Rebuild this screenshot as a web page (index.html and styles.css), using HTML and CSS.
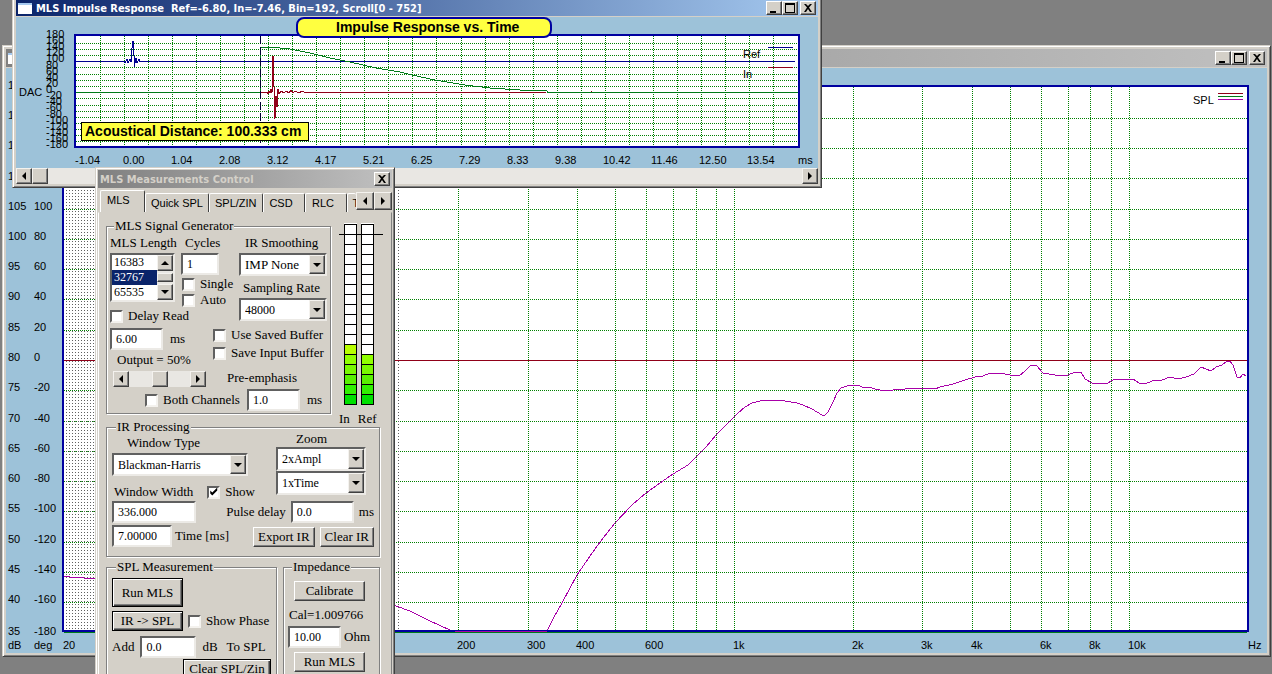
FILE: index.html
```html
<!DOCTYPE html>
<html lang="en">
<head>
<meta charset="utf-8">
<title>MLS Measurements</title>
<link rel="stylesheet" href="styles.css">
</head>
<body>
<main class="desktop">

<section class="window spl-window" aria-label="SPL">
  <header class="titlebar inactive">
    <span class="app-icon"></span>
    <span class="title"></span>
    <span class="window-buttons">
      <button class="cap" aria-label="Minimize"><svg viewBox="1 1 14 12"><path d="M4 10h6v2H4z"/></svg></button>
      <button class="cap" aria-label="Maximize"><svg viewBox="1 1 14 12"><path d="M3 2h10v10H3zM4 4v7h8V4z" fill-rule="evenodd"/></svg></button>
      <button class="cap close" aria-label="Close"><svg viewBox="1 1 14 12"><path d="M4 3h2l2 2 2-2h2L9 6.500l3 4.500h-2L8 8l-2 3H4l3-4.500z"/></svg></button>
    </span>
  </header>
  <svg class="chart" viewBox="6 68 1261 585" role="img" aria-label="SPL versus frequency">
    <path class="plot" d="M64 87H1247V631H64z"/>
    <path class="grid" d="M64 118H1247M64 148H1247M64 178H1247M64 209H1247M64 239H1247M64 269H1247M64 299H1247M64 330H1247M64 390H1247M64 421H1247M64 451H1247M64 481H1247M64 511H1247M64 542H1247M64 572H1247M64 602H1247M458 87V631M528 87V631M577 87V631M615 87V631M646 87V631M673 87V631M696 87V631M716 87V631M734 87V631M853 87V631M922 87V631M972 87V631M1010 87V631M1041 87V631M1068 87V631M1090 87V631M1111 87V631M1129 87V631"/>
    <path class="fine" d="M66 88V631M69 88V631M72 88V631M75 88V631M78 88V631M81 88V631M84 88V631M87 88V631M90 88V631M93 88V631M398 88V631"/>
    <path class="line red" d="M64 360H1247"/>
    <path class="line magenta" d="M64 576L70 577L84 578H100M390 605L396 606L410 611L430 621L450 630L455 631H547L554 617L562 603L577 575L590 556L600 542L615 523L632 505L646 493L660 483L673 474L688 465L697 456L706 447L716 435L729 422L737 414L745 407L752 403L760 401L770 400L785 401L797 403L803 405L812 409L822 415H825L828 412L833 402L837 393L841 388L847 386L853 385H858L862 387H869L875 389L880 390H893L905 389L920 388H930L935 389L940 387L953 384L965 380L975 377L983 376L990 373H1000L1010 375L1019 376L1025 371L1031 365H1036L1043 373L1055 375H1068L1075 372H1081L1085 379L1092 383L1106 384L1115 379H1133L1139 383H1147L1155 380H1162L1170 377L1178 379L1186 377L1194 374L1198 370L1201 367L1206 369L1211 371L1216 367L1222 365L1226 362L1230 361L1233 365L1237 377L1240 378L1243 374L1246 376"/>
    <path class="frame" d="M63 86H1248V631H63z"/>
    <path class="line green" d="M64 632H1247"/>
    <path class="line magenta" d="M455 631H547"/>
    <text x="1193" y="104">SPL</text>
    <path class="line red" d="M1218 93H1243"/><path class="line green" d="M1218 96H1243"/><path class="line magenta" d="M1218 99H1243"/>
    <text><tspan x="8" y="89">125</tspan><tspan x="8" y="119">120</tspan><tspan x="8" y="149">115</tspan><tspan x="8" y="180">110</tspan><tspan x="8" y="210">105</tspan><tspan x="8" y="240">100</tspan><tspan x="8" y="270">95</tspan><tspan x="8" y="300">90</tspan><tspan x="8" y="331">85</tspan><tspan x="8" y="361">80</tspan><tspan x="8" y="391">75</tspan><tspan x="8" y="422">70</tspan><tspan x="8" y="452">65</tspan><tspan x="8" y="482">60</tspan><tspan x="8" y="512">55</tspan><tspan x="8" y="543">50</tspan><tspan x="8" y="573">45</tspan><tspan x="8" y="603">40</tspan><tspan x="8" y="635">35</tspan><tspan x="8" y="649">dB</tspan></text>
    <text><tspan x="34" y="210">100</tspan><tspan x="34" y="240">80</tspan><tspan x="34" y="270">60</tspan><tspan x="34" y="300">40</tspan><tspan x="34" y="331">20</tspan><tspan x="34" y="361">0</tspan><tspan x="34" y="391">-20</tspan><tspan x="34" y="422">-40</tspan><tspan x="34" y="452">-60</tspan><tspan x="34" y="482">-80</tspan><tspan x="34" y="512">-100</tspan><tspan x="34" y="543">-120</tspan><tspan x="34" y="573">-140</tspan><tspan x="34" y="603">-160</tspan><tspan x="34" y="635">-180</tspan><tspan x="34" y="649">deg</tspan></text>
    <text><tspan x="63" y="649">20</tspan><tspan x="457" y="649">200</tspan><tspan x="527" y="649">300</tspan><tspan x="576" y="649">400</tspan><tspan x="645" y="649">600</tspan><tspan x="733" y="649">1k</tspan><tspan x="852" y="649">2k</tspan><tspan x="921" y="649">3k</tspan><tspan x="971" y="649">4k</tspan><tspan x="1040" y="649">6k</tspan><tspan x="1089" y="649">8k</tspan><tspan x="1128" y="649">10k</tspan><tspan x="1248" y="649">Hz</tspan></text>
  </svg>
</section>

<section class="window impulse-window" aria-label="MLS Impulse Response">
  <header class="titlebar">
    <span class="app-icon"></span>
    <span class="title">MLS Impulse Response&nbsp; Ref=-6.80, In=-7.46, Bin=192, Scroll[0 - 752]</span>
    <span class="window-buttons">
      <button class="cap" aria-label="Minimize"><svg viewBox="1 1 14 12"><path d="M4 10h6v2H4z"/></svg></button>
      <button class="cap" aria-label="Maximize"><svg viewBox="1 1 14 12"><path d="M3 2h10v10H3zM4 4v7h8V4z" fill-rule="evenodd"/></svg></button>
      <button class="cap close" aria-label="Close"><svg viewBox="1 1 14 12"><path d="M4 3h2l2 2 2-2h2L9 6.500l3 4.500h-2L8 8l-2 3H4l3-4.500z"/></svg></button>
    </span>
  </header>
  <svg class="chart" viewBox="16 17 802 151" role="img" aria-label="Impulse response versus time">
    <path class="plot" d="M76 36H798V146H76z"/>
    <path class="grid" d="M76 43H798M76 49H798M76 55H798M76 67H798M76 74H798M76 80H798M76 86H798M76 98H798M76 105H798M76 111H798M76 117H798M76 123H798M76 129H798M76 135H798M76 141H798M100 36V146M124 36V146M148 36V146M172 36V146M196 36V146M220 36V146M244 36V146M268 36V146M292 36V146M316 36V146M340 36V146M364 36V146M388 36V146M412 36V146M436 36V146M461 36V146M485 36V146M509 36V146M533 36V146M557 36V146M581 36V146M605 36V146M629 36V146M653 36V146M677 36V146M701 36V146M725 36V146M749 36V146M773 36V146"/>
    <path class="line navy" d="M76 61H124L125 63L127 59L128 63L130 59L131 62L132 48L133 41L134 56L134 67L136 58L137 63L139 59L140 62L141 61H795"/>
    <path class="line green" d="M76 92H260V47H270L290 49L310 53L330 58L350 62L376 68L400 72L412 75L435 80L465 85L490 88L520 90L547 91V92H798"/>
    <path class="line red" d="M261 92H267L268 94L269 91L270 93L271 89L272 93L273 56L274 87L275 119L276 96L277 107L278 89L279 94L281 91L284 93L286 91L289 93L291 90L293 93L295 91L299 93L302 91L306 93L308 92L313 93L316 92L320 93L322 92H546M591 92L592 91"/>
    <path class="marker" d="M260 36V148"/>
    <path class="frame" d="M75 35H799V147H75z"/>
    <rect class="badge" x="81" y="122" width="227" height="18"/>
    <text class="bold" x="85" y="136">Acoustical Distance: 100.333 cm</text>
    <rect class="badge pill" x="297" y="18" width="254" height="19" rx="7"/>
    <text class="bold" x="336" y="32">Impulse Response vs. Time</text>
    <text x="743" y="58">Ref</text><text x="743" y="78">In</text>
    <path class="line navy" d="M768 47H793"/><path class="line red" d="M768 67H793"/>
    <text x="19" y="96">DAC</text>
    <text><tspan x="46" y="38">180</tspan><tspan x="46" y="44">160</tspan><tspan x="46" y="50">140</tspan><tspan x="46" y="56">120</tspan><tspan x="46" y="62">100</tspan><tspan x="46" y="69">80</tspan><tspan x="46" y="75">60</tspan><tspan x="46" y="81">40</tspan><tspan x="46" y="87">20</tspan><tspan x="46" y="93">0</tspan><tspan x="46" y="99">-20</tspan><tspan x="46" y="105">-40</tspan><tspan x="46" y="111">-60</tspan><tspan x="46" y="118">-80</tspan><tspan x="46" y="124">-100</tspan><tspan x="46" y="130">-120</tspan><tspan x="46" y="136">-140</tspan><tspan x="46" y="142">-160</tspan><tspan x="46" y="148">-180</tspan></text>
    <text><tspan x="75" y="164">-1.04</tspan><tspan x="123" y="164">0.00</tspan><tspan x="171" y="164">1.04</tspan><tspan x="219" y="164">2.08</tspan><tspan x="267" y="164">3.12</tspan><tspan x="315" y="164">4.17</tspan><tspan x="363" y="164">5.21</tspan><tspan x="411" y="164">6.25</tspan><tspan x="459" y="164">7.29</tspan><tspan x="507" y="164">8.33</tspan><tspan x="555" y="164">9.38</tspan><tspan x="603" y="164">10.42</tspan><tspan x="651" y="164">11.46</tspan><tspan x="699" y="164">12.50</tspan><tspan x="747" y="164">13.54</tspan><tspan x="798" y="164">ms</tspan></text>
  </svg>
  <div class="scroll">
    <button class="sb left" aria-label="Scroll left"></button><span class="thumb"></span><button class="sb right end" aria-label="Scroll right"></button>
  </div>
</section>

<section class="window dialog" aria-label="MLS Measurements Control">
  <header class="titlebar inactive">
    <span class="title">MLS Measurements Control</span>
    <button class="cap close" aria-label="Close"><svg viewBox="1 1 14 12"><path d="M4 3h2l2 2 2-2h2L9 6.500l3 4.500h-2L8 8l-2 3H4l3-4.500z"/></svg></button>
  </header>
  <nav class="tabs">
    <button class="tab current">MLS</button><button class="tab">Quick SPL</button><button class="tab">SPL/ZIN</button><button class="tab mid">CSD</button><button class="tab mid">RLC</button><button class="tab cut">T</button><button class="sb left" aria-label="Previous tabs"></button><button class="sb right" aria-label="Next tabs"></button>
  </nav>
  <div class="panel">
    <div class="generator-row">
      <fieldset class="generator">
        <legend>MLS Signal Generator</legend>
        <div class="gen-grid">
          <div class="length">
            <label for="len">MLS Length</label>
            <div class="listbox">
              <select id="len" size="3"><option>16383</option><option selected>32767</option><option>65535</option></select>
              <div class="vscroll"><button class="sb up" aria-label="Up"></button><span class="vthumb"></span><button class="sb down" aria-label="Down"></button></div>
            </div>
          </div>
          <div class="cycles">
            <label for="cyc">Cycles</label>
            <input id="cyc" class="w38" value="1">
            <label class="check"><input type="checkbox">Single</label>
            <label class="check"><input type="checkbox">Auto</label>
          </div>
          <div class="rates">
            <label for="smooth" class="indent">IR Smoothing</label>
            <div class="combo"><select id="smooth"><option>IMP None</option></select><span class="drop"></span></div>
            <label for="rate" class="gap">Sampling Rate</label>
            <div class="combo"><select id="rate" class="num"><option>48000</option></select><span class="drop"></span></div>
          </div>
          <div class="delay">
            <label class="check"><input type="checkbox">Delay Read</label>
            <label class="field"><input class="w53" value="6.00">ms</label>
            <span class="output">Output = 50%</span>
            <div class="scroll mini"><button class="sb left" aria-label="Less output"></button><span class="thumb"></span><button class="sb right end" aria-label="More output"></button></div>
          </div>
          <div class="buffers">
            <label class="check"><input type="checkbox">Use Saved Buffer</label>
            <label class="check"><input type="checkbox">Save Input Buffer</label>
            <label for="pre" class="pre">Pre-emphasis</label>
          </div>
          <div class="both">
            <label class="check"><input type="checkbox">Both Channels</label>
            <label class="field"><input id="pre" class="w53" value="1.0">ms</label>
          </div>
        </div>
      </fieldset>
      <div class="meters">
        <svg class="meter" viewBox="0 0 45 182" role="img" aria-label="Input and reference levels">
          <path fill="#fff" d="M5 0H18V182H5zM22 0H35V182H22z"/>
          <path fill="#b8ff00" d="M5 121H18V131H5z"/>
          <path fill="#90ff00" d="M5 131H18V141H5zM22 131H35V141H22z"/>
          <path fill="#78f800" d="M5 141H18V151H5zM22 141H35V151H22z"/>
          <path fill="#58f000" d="M5 151H18V161H5zM22 151H35V161H22z"/>
          <path fill="#30f000" d="M5 161H18V171H5zM22 161H35V171H22z"/>
          <path fill="#00e000" d="M5 171H18V181H5zM22 171H35V181H22z"/>
          <path class="cells" d="M5 1H17V181H5zM22 1H34V181H22zM0 11H44M5 21H17M22 21H34M5 31H17M22 31H34M5 41H17M22 41H34M5 51H17M22 51H34M5 61H17M22 61H34M5 71H17M22 71H34M5 81H17M22 81H34M5 91H17M22 91H34M5 101H17M22 101H34M5 111H17M22 111H34M5 121H17M22 121H34M5 131H17M22 131H34M5 141H17M22 141H34M5 151H17M22 151H34M5 161H17M22 161H34M5 171H17M22 171H34"/>
        </svg>
        <div class="meter-names"><span>In</span><span>Ref</span></div>
      </div>
    </div>

    <fieldset class="processing">
      <legend>IR Processing</legend>
      <div class="proc-top">
        <div class="win-type">
          <label for="wt">Window Type</label>
          <div class="combo wide"><select id="wt" class="num"><option>Blackman-Harris</option></select><span class="drop"></span></div>
          <div class="win-width"><label for="ww">Window Width</label><label class="check"><input type="checkbox" checked>Show</label></div>
        </div>
        <div class="zoom">
          <label for="za">Zoom</label>
          <div class="combo"><select id="za" class="num"><option>2xAmpl</option></select><span class="drop"></span></div>
          <div class="combo"><select class="num" aria-label="Time zoom"><option>1xTime</option></select><span class="drop"></span></div>
        </div>
      </div>
      <div class="proc-row">
        <input id="ww" class="w84" value="336.000">
        <label class="field pulse">Pulse delay<input class="w63" value="0.0">ms</label>
      </div>
      <div class="proc-row">
        <label class="field tight"><input class="w60" value="7.00000">Time [ms]</label>
        <span class="actions"><button class="btn">Export IR</button><button class="btn">Clear IR</button></span>
      </div>
    </fieldset>

    <div class="bottom-row">
      <fieldset class="spl">
        <legend>SPL Measurement</legend>
        <button class="btn default big">Run MLS</button>
        <div class="phase"><button class="btn default">IR -&gt; SPL</button><label class="check"><input type="checkbox">Show Phase</label></div>
        <div class="add"><label class="field">Add<input class="w56" value="0.0">dB</label><span class="to">To SPL</span></div>
        <button class="btn default clear">Clear SPL/Zin</button>
      </fieldset>
      <fieldset class="impedance">
        <legend>Impedance</legend>
        <button class="btn">Calibrate</button>
        <span class="cal">Cal=1.009766</span>
        <label class="field tight"><input class="w53" value="10.00">Ohm</label>
        <button class="btn">Run MLS</button>
      </fieldset>
    </div>
  </div>
</section>

</main>
</body>
</html>
```
FILE: styles.css
```css
* { box-sizing: border-box; }
body { margin: 0; background: #808080; }
button, input, select { font: inherit; color: #000; margin: 0; padding: 0; border-radius: 0; }
.desktop {
  position: relative;
  height: 100vh;
  overflow: hidden;
  font-family: "Liberation Serif", serif;
  font-size: 13px;
  color: #000;
}

/* windows */
.window {
  position: absolute;
  display: flex;
  flex-direction: column;
  padding: 3px;
  background: #d4d0c8;
  border: 1px solid;
  border-color: #d4d0c8 #404040 #404040 #d4d0c8;
  box-shadow: inset 1px 1px #fff, inset -1px -1px #808080;
}
.spl-window { left: 2px; right: 1px; top: 45px; bottom: 17px; }
.impulse-window { left: 12px; top: -6px; width: 810px; }
.dialog { left: 95px; top: 167px; width: 300px; padding: 2px; }
.titlebar {
  display: flex;
  align-items: center;
  flex: none;
  height: 18px;
  margin-bottom: 1px;
  padding: 0 2px;
  background: linear-gradient(90deg, #0a246a, #a6caf0);
  color: #fff;
  font: bold 11px "DejaVu Sans Condensed", "DejaVu Sans", sans-serif;
}
.impulse-window .titlebar { padding-top: 2px; }
.titlebar.inactive { background: linear-gradient(90deg, #808080, #c0c0c0); color: #d4d0c8; }
.title { flex: 1; white-space: nowrap; }
.app-icon { width: 14px; height: 11px; margin-right: 4px; background: #fff; border-top: 2px solid #a6caf0; }
.window-buttons { display: flex; }
.cap {
  width: 16px;
  height: 14px;
  background: #d4d0c8;
  border: 1px solid;
  border-color: #fff #404040 #404040 #fff;
  box-shadow: inset -1px -1px #808080;
}
.window-buttons .close { margin-left: 2px; }
.cap svg { display: block; width: 100%; height: 100%; }

/* charts */
.chart { display: block; width: 100%; flex: 1; min-height: 0; background: #9dc2d9; font: 11px "Liberation Sans", sans-serif; }
.chart .bold { font: bold 14px "Liberation Sans", sans-serif; }
.plot { fill: #fff; }
.grid, .fine, .line, .marker, .frame { fill: none; shape-rendering: crispEdges; }
.grid { stroke: #008000; stroke-dasharray: 1 1; }
.fine { stroke: #606060; stroke-dasharray: 1 2; }
.marker { stroke: #000030; stroke-dasharray: 8 3; }
.frame { stroke: #0000a0; stroke-width: 2; }
.red { stroke: #900018; }
.green { stroke: #007a18; }
.magenta { stroke: #a800a8; }
.navy { stroke: #000090; }
.badge { fill: #ffff40; stroke: #000; shape-rendering: crispEdges; }
.badge.pill { stroke: #0000a0; stroke-width: 2; shape-rendering: auto; }

/* scroll bars */
.sb, .thumb, .vthumb, .drop {
  flex: none;
  width: 16px;
  height: 16px;
  background: #d4d0c8;
  border: 1px solid;
  border-color: #f4f2ee #404040 #404040 #f4f2ee;
  box-shadow: inset -1px -1px #808080;
}
.sb, .drop { display: flex; align-items: center; justify-content: center; }
.sb::before, .drop::before { content: ""; border: 4px solid transparent; }
.left::before { border-left-width: 0; border-right-color: #000; }
.right::before { border-right-width: 0; border-left-color: #000; }
.up::before { border-top-width: 0; border-bottom-color: #000; }
.down::before, .drop::before { border-bottom-width: 0; border-top-color: #000; }
.scroll { display: flex; height: 16px; background: #e9e7e3; }
.end { margin-left: auto; }
.mini { width: 93px; }
.mini .thumb { margin-left: 23px; }

/* tabs */
.tabs { display: flex; align-items: flex-end; height: 23px; padding-left: 2px; font: 11px "Liberation Sans", sans-serif; }
.tab {
  height: 19px;
  padding: 0 5px;
  background: #d4d0c8;
  border: 0 solid;
  border-width: 1px 1px 0;
  border-color: #fff #404040 #fff #fff;
  border-radius: 2px 2px 0 0;
  white-space: nowrap;
}
.tab.current { width: 45px; height: 22px; padding: 0 8px 4px 6px; text-align: left; }
.tab.mid { width: 42px; padding-right: 10px; }
.tab.cut { flex: 1; min-width: 0; padding: 0 0 0 5px; overflow: hidden; border-right: 0; text-align: left; }
.tabs .sb { width: 18px; height: 18px; align-self: center; }
.panel { padding: 5px 11px 12px 7px; border: 1px solid; border-color: transparent #808080 #808080 #fff; }

/* controls */
fieldset { min-width: 0; margin: 0; padding: 0 3px; border: 1px solid #808080; box-shadow: 1px 1px #fff, inset 1px 1px #fff; background: #d4d0c8; }
legend { margin-left: 4px; padding: 0 1px; line-height: 16px; background: #d4d0c8; }
label, .field, .check, .output, .to, .cal { white-space: nowrap; line-height: 16px; }
input:not([type="checkbox"]), .combo, .listbox {
  background: #fff;
  border: 2px solid;
  border-color: #606060 #eceae6 #eceae6 #606060;
}
input:not([type="checkbox"]) { height: 22px; padding-left: 4px; font-size: 12px; }
input[type="checkbox"] {
  appearance: none;
  flex: none;
  width: 13px;
  height: 13px;
  background: #fff;
  border: 2px solid;
  border-color: #606060 #f4f2ee #f4f2ee #606060;
}
input[type="checkbox"]:checked::before {
  content: "";
  display: block;
  width: 9px;
  height: 9px;
  background: #000;
  clip-path: polygon(1px 3px, 3px 5px, 8px 0, 8px 3px, 3px 8px, 1px 6px);
}
.check { display: flex; align-items: center; gap: 5px; }
.field { display: flex; align-items: center; gap: 7px; }
.field.tight { gap: 3px; }
.w38 { width: 38px; }
.w53 { width: 53px; }
.w56 { width: 56px; }
.w60 { width: 60px; }
.w63 { width: 63px; }
.w84 { width: 84px; }
.combo { display: flex; width: 88px; height: 23px; }
.combo.wide { width: 136px; }
.combo select { appearance: none; flex: 1; min-width: 0; padding-left: 4px; border: 0; background: #fff; }
.combo .num { font-size: 12px; }
.drop { height: 19px; }
.btn {
  height: 20px;
  padding: 0 4px;
  background: #d4d0c8;
  border: 1px solid;
  border-color: #fff #404040 #404040 #fff;
  box-shadow: inset -1px -1px #808080;
  white-space: nowrap;
}
.btn.default { border-color: #000; box-shadow: inset 1px 1px #fff, inset -1px -1px #404040, inset -2px -2px #808080; }

/* signal generator */
.generator-row { display: flex; gap: 8px; height: 196px; }
.generator { flex: none; width: 225px; }
.gen-grid {
  display: grid;
  grid-template-columns: 71px 32px 26px 1fr;
  grid-template-rows: 73px 18px 63px 22px;
  padding-top: 1px;
}
.gen-grid > div, .win-type, .zoom { display: flex; flex-direction: column; align-items: flex-start; }
.length { grid-area: 1 / 1; }
.cycles { grid-area: 1 / 2 / 2 / 4; }
.rates { grid-area: 1 / 4 / 3 / 5; }
.delay { grid-area: 2 / 1 / 4 / 3; }
.buffers { grid-area: 3 / 3 / 4 / 5; }
.gen-grid > .both { grid-area: 4 / 1 / 5 / 5; flex-direction: row; align-items: center; gap: 7px; padding-left: 35px; }
.listbox { display: flex; width: 65px; height: 49px; margin-top: 2px; }
.listbox select { flex: 1; min-width: 0; border: 0; outline: 0; overflow: hidden; font-size: 12px; background: #fff; }
.listbox option { height: 15px; min-height: 15px; padding: 0 2px; line-height: 15px; }
.listbox option:checked { background: #0a246a linear-gradient(#0a246a, #0a246a); -webkit-text-fill-color: #fff; color: #fff; }
.vscroll { display: flex; flex-direction: column; width: 16px; background: #e9e7e3; }
.vthumb { height: 9px; margin-top: 2px; }
.vscroll .down { margin-top: auto; }
.cycles > label:first-child { padding-left: 4px; }
.cycles input.w38 { margin: 2px 0 1px; }
.cycles .check { padding-left: 1px; }
.rates .indent { padding-left: 6px; }
.rates .combo { margin-top: 2px; }
.rates .gap { margin-top: 4px; padding-left: 4px; }
.delay .field { margin-top: 4px; }
.output { margin-top: 2px; padding-left: 7px; }
.delay .mini { margin: 3px 0 0 3px; }
.buffers .check { height: 18px; }
.buffers .pre { margin-top: 8px; padding-left: 14px; }
.meters { flex: none; width: 45px; padding-top: 5px; }
.meter { display: block; width: 100%; overflow: visible; }
.cells { fill: none; stroke: #000; shape-rendering: crispEdges; }
.meter-names { display: flex; gap: 8px; margin-top: 6px; }

/* impulse processing */
.processing { height: 138px; padding: 0 5px; margin-top: 5px; }
.proc-top { display: flex; justify-content: space-between; height: 66px; }
.win-type > label { padding-left: 15px; }
.win-type .combo { margin-top: 2px; }
.win-width { display: flex; gap: 14px; margin-top: 8px; padding-left: 2px; }
.zoom { margin: -4px 8px 0 0; }
.zoom label { padding-left: 20px; }
.zoom .combo { width: 90px; height: 24px; }
.zoom .drop { height: 20px; }
.proc-row { display: flex; justify-content: space-between; margin-bottom: 2px; }
.pulse { gap: 5px; }
.actions { display: flex; gap: 5px; align-items: flex-end; }

/* bottom groups */
.bottom-row { display: flex; gap: 6px; margin-top: 2px; }
.spl { width: 171px; height: 130px; padding: 0 5px; }
.impedance { flex: 1; display: flex; flex-direction: column; padding: 0 4px; }
.big { display: block; width: 71px; height: 29px; margin: 3px 0 4px; }
.phase { display: flex; gap: 5px; }
.phase .btn { width: 71px; }
.add { display: flex; align-items: center; gap: 9px; margin: 5px 0 1px; }
.add .field { gap: 6px; }
.clear { display: block; margin-left: auto; width: 88px; }
.impedance .btn { width: 71px; margin: 6px 0 0 6px; }
.cal { margin: 6px 0 3px 1px; }
.impedance .field + .btn { margin-top: 4px; }
```
